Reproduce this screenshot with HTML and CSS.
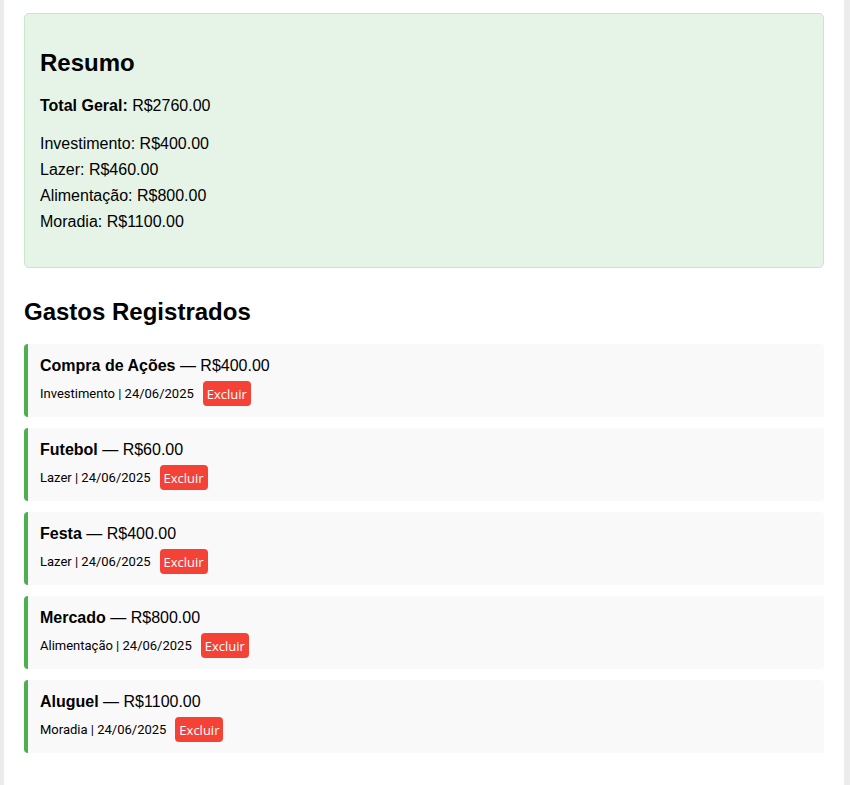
FILE: index.html
```html
<!DOCTYPE html>
<html lang="pt-BR">
<head>
<meta charset="utf-8">
<title>Gastos</title>
<link rel="stylesheet" href="styles.css">
</head>
<body>
<div class="container">
  <section class="summary">
    <h2 class="summary-title">Resumo</h2>
    <p class="total"><strong>Total Geral:</strong> R$2760.00</p>
    <div class="cats">
      <div class="cat">Investimento: R$400.00</div>
      <div class="cat">Lazer: R$460.00</div>
      <div class="cat">Alimentação: R$800.00</div>
      <div class="cat">Moradia: R$1100.00</div>
    </div>
  </section>
  <h2 class="list-title">Gastos Registrados</h2>
  <div class="list">
    <div class="item">
      <div class="item-title"><strong>Compra de Ações</strong> — R$400.00</div>
      <div class="item-meta"><span class="meta">Investimento | 24/06/2025</span><button class="del">Excluir</button></div>
    </div>
    <div class="item">
      <div class="item-title"><strong>Futebol</strong> — R$60.00</div>
      <div class="item-meta"><span class="meta">Lazer | 24/06/2025</span><button class="del">Excluir</button></div>
    </div>
    <div class="item">
      <div class="item-title"><strong>Festa</strong> — R$400.00</div>
      <div class="item-meta"><span class="meta">Lazer | 24/06/2025</span><button class="del">Excluir</button></div>
    </div>
    <div class="item">
      <div class="item-title"><strong>Mercado</strong> — R$800.00</div>
      <div class="item-meta"><span class="meta">Alimentação | 24/06/2025</span><button class="del">Excluir</button></div>
    </div>
    <div class="item">
      <div class="item-title"><strong>Aluguel</strong> — R$1100.00</div>
      <div class="item-meta"><span class="meta">Moradia | 24/06/2025</span><button class="del">Excluir</button></div>
    </div>
  </div>
</div>
</body>
</html>
```

FILE: styles.css
```css
html, body {
  margin: 0;
  padding: 0;
}
body {
  background: #ececec;
  font-family: "Liberation Sans", Arial, sans-serif;
  color: #000;
  font-size: 16px;
}
.container {
  background: #fff;
  margin-left: 4px;
  width: 840px;
  box-sizing: border-box;
  padding: 13px 20px 40px;
  min-height: 785px;
}
.summary {
  background: #e6f4e7;
  border: 1px solid #c8e6c9;
  border-radius: 5px;
  padding: 35px 15px 32px;
}
.summary-title {
  margin: 0 0 16px;
  font-size: 24px;
  line-height: 28px;
}
.total {
  margin: 0 0 12px;
  line-height: 26px;
}
.cat {
  line-height: 26px;
}
.list-title {
  margin: 30px 0 18px;
  font-size: 24px;
  line-height: 28px;
}
.list {
  display: flex;
  flex-direction: column;
  gap: 11px;
}
.item {
  background: #f9f9f9;
  border-left: 4px solid #4caf50;
  border-radius: 4px;
  padding: 12px 12px 11px;
}
.item-title {
  line-height: 20px;
}
.item-meta {
  display: flex;
  align-items: center;
  margin-top: 5px;
}
.meta {
  font-family: Roboto, "Liberation Sans", sans-serif;
  font-size: 13px;
}
.del {
  margin-left: 9px;
  background: #f44336;
  color: #fff;
  border: none;
  border-radius: 4px;
  font-family: "Open Sans", "Liberation Sans", sans-serif;
  font-size: 13px;
  height: 25px;
  padding: 0 4px;
}
```
